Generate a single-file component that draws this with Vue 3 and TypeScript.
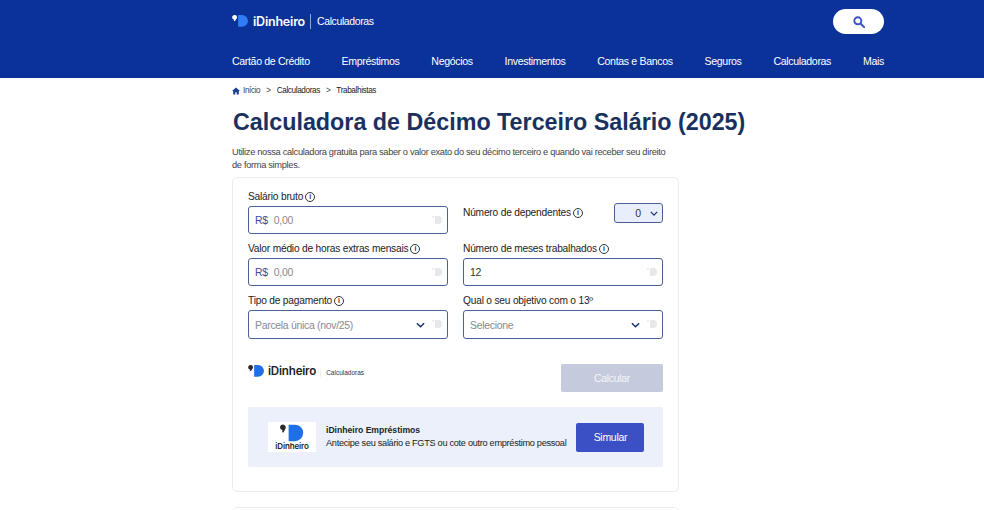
<script setup lang="ts">
const nav: string[] = ['Cartão de Crédito', 'Empréstimos', 'Negócios', 'Investimentos', 'Contas e Bancos', 'Seguros', 'Calculadoras', 'Mais']
</script>

<template>
  <div class="page">
    <header class="header">
      <div class="wrap">
        <div class="top">
          <div class="brand">
            <svg class="logo" viewBox="0 0 17 13" width="16" height="12"><path d="M6.5 0h4.2a6.3 6.3 0 0 1 0 12.8H6.5z" fill="#2f7df6"/><path d="M0 2.6a2.6 2.6 0 1 1 4.7 1.5L3 6.6 1.8 6.4 2 5A2.6 2.6 0 0 1 0 2.6z" fill="#fff"/></svg>
            <span class="wordmark">iDinheiro</span>
            <span class="divider"></span>
            <span class="brand-sub">Calculadoras</span>
          </div>
          <div class="search">
            <svg viewBox="0 0 14 14" width="12" height="12"><circle cx="5.6" cy="5.6" r="4.1" fill="none" stroke="#3a50c4" stroke-width="2.2"/><path d="M8.8 8.8 13 13" stroke="#3a50c4" stroke-width="2.4" stroke-linecap="round"/></svg>
          </div>
        </div>
        <nav class="nav"><a v-for="item in nav" :key="item">{{ item }}</a></nav>
      </div>
    </header>

    <main class="wrap">
      <div class="crumbs">
        <svg viewBox="0 0 10 10" width="8" height="8"><path d="M5 .5 0 5h1.5v4.5h2.6V6.5h1.8v3h2.6V5H10z" fill="#1c3f94"/></svg>
        <span class="home">Início</span><span class="sep">&gt;</span><span>Calculadoras</span><span class="sep">&gt;</span><span>Trabalhistas</span>
      </div>
      <h1 class="title">Calculadora de Décimo Terceiro Salário (2025)</h1>
      <p class="intro">Utilize nossa calculadora gratuita para saber o valor exato do seu décimo terceiro e quando vai receber seu direito de forma simples.</p>

      <section class="card">
        <div class="grid">
          <div class="field">
            <label>Salário bruto <i class="info">i</i></label>
            <div class="input"><b class="prefix">R$</b><span class="ph">0,00</span><span class="ghost"><em></em><u></u></span></div>
          </div>
          <div class="field-inline">
            <label>Número de dependentes <i class="info">i</i></label>
            <div class="mini-select"><span>0</span><svg viewBox="0 0 10 6" width="8" height="5"><path d="M1 1l4 4 4-4" fill="none" stroke="#16306e" stroke-width="1.5"/></svg></div>
          </div>
          <div class="field">
            <label>Valor médio de horas extras mensais <i class="info">i</i></label>
            <div class="input"><b class="prefix">R$</b><span class="ph">0,00</span><span class="ghost"><em></em><u></u></span></div>
          </div>
          <div class="field">
            <label>Número de meses trabalhados <i class="info">i</i></label>
            <div class="input"><span class="val">12</span><span class="ghost"><em></em><u></u></span></div>
          </div>
          <div class="field">
            <label>Tipo de pagamento <i class="info">i</i></label>
            <div class="input tall"><span class="ph">Parcela única (nov/25)</span><svg class="chev" viewBox="0 0 10 6" width="9" height="6"><path d="M1 1l4 4 4-4" fill="none" stroke="#16306e" stroke-width="1.6"/></svg><span class="ghost"><em></em><u></u></span></div>
          </div>
          <div class="field">
            <label>Qual o seu objetivo com o 13º</label>
            <div class="input tall"><span class="ph">Selecione</span><svg class="chev" viewBox="0 0 10 6" width="9" height="6"><path d="M1 1l4 4 4-4" fill="none" stroke="#16306e" stroke-width="1.6"/></svg><span class="ghost"><em></em><u></u></span></div>
          </div>
        </div>

        <div class="actions">
          <div class="brand2">
            <svg viewBox="0 0 17 13" width="16" height="12"><path d="M6.5 0h4.2a6.3 6.3 0 0 1 0 12.8H6.5z" fill="#1f6fe8"/><path d="M0 2.6a2.6 2.6 0 1 1 4.7 1.5L3 6.6 1.8 6.4 2 5A2.6 2.6 0 0 1 0 2.6z" fill="#2b2b2b"/></svg>
            <span class="wordmark dark">iDinheiro</span>
            <span class="brand2-line"></span>
            <span class="brand2-sub">Calculadoras</span>
          </div>
          <button class="calc" type="button">Calcular</button>
        </div>

        <div class="promo">
          <div class="promo-logo">
            <svg viewBox="0 0 26 18" width="25" height="18"><path d="M9 .3h6.5a8.6 8.6 0 0 1 0 17.2H9z" fill="#1f6fe8"/><path d="M0 3.2a3 3 0 1 1 5.4 1.8L3.6 8.4 2.3 8.2 2.5 6A3 3 0 0 1 0 3.2z" fill="#2b2b2b"/></svg>
            <span>iDinheiro</span>
          </div>
          <div class="promo-text">
            <strong>iDinheiro Empréstimos</strong>
            <span>Antecipe seu salário e FGTS ou cote outro empréstimo pessoal</span>
          </div>
          <button class="simular" type="button">Simular</button>
        </div>
      </section>

      <div class="next-card"></div>
    </main>
  </div>
</template>

<style>
html, body { margin: 0; background: #fff; overflow: hidden; }
</style>

<style scoped>
.page { font-family: "Liberation Sans", Arial, sans-serif; color: #222; height: 510px; overflow: hidden; }
.wrap { width: 652px; margin-left: 232px; }
.header { background: #0a3299; height: 78px; color: #fff; }
.top { height: 42px; display: flex; justify-content: space-between; align-items: flex-start; }
.brand { display: flex; align-items: center; height: 42px; }
.wordmark { font-family: "Inter", "Liberation Sans", sans-serif; font-weight: 600; font-size: 12.5px; letter-spacing: -.2px; margin-left: 5px; }
.wordmark.dark { color: #222; }
.divider { width: 1px; height: 15px; background: #8ea3d8; margin: 0 6px 0 5px; }
.brand-sub { font-size: 10.5px; letter-spacing: -.4px; }
.search { width: 51px; height: 25px; margin-top: 9px; border-radius: 13px; background: #fff; display: flex; align-items: center; justify-content: center; }
.nav { display: flex; justify-content: space-between; font-size: 10.6px; letter-spacing: -.35px; line-height: 12px; padding-top: 13px; }
.crumbs { height: 25px; display: flex; align-items: center; gap: 6px; font-size: 8.2px; letter-spacing: -.38px; color: #222; }
.crumbs .home { margin-left: -3px; color: #444; }
.crumbs .sep { color: #444; }
.title { margin: 0; padding: 6px 0 0 1px; font-size: 23.3px; line-height: 27px; font-weight: 700; color: #1a3160; }
.intro { margin: 10px 0 0; width: 440px; font-size: 9.3px; letter-spacing: -.33px; line-height: 13px; color: #444; }
.card { box-sizing: border-box; margin-top: 5px; width: 447px; height: 315px; border: 1px solid #ececf0; border-radius: 5px; padding: 12px 15px 0; }
.grid { display: grid; grid-template-columns: 200px 200px; column-gap: 15px; grid-template-rows: 44px 44px 45px; row-gap: 8px; }
.field { display: flex; flex-direction: column; gap: 3px; padding-top: 1px; }
label { font-size: 10.2px; letter-spacing: -.2px; line-height: 12px; color: #222; display: flex; align-items: center; gap: 2px; }
.info { box-sizing: border-box; width: 10px; height: 10px; border: 1px solid #333; border-radius: 50%; font: 700 7px/8px "Liberation Sans", sans-serif; text-align: center; color: #333; letter-spacing: 0; }
.input { box-sizing: border-box; height: 28px; border: 1px solid #4b6099; border-radius: 3px; display: flex; align-items: center; padding: 0 4px 0 6px; font-size: 10.5px; letter-spacing: -.32px; }
.input.tall { height: 29px; }
.prefix { font-weight: 400; color: #3a509a; margin-right: 6px; }
.ph { color: #8a8a90; }
.val { color: #333; }
.ghost { margin-left: auto; width: 11px; height: 9px; display: flex; align-items: flex-start; gap: 1px; }
.ghost em { width: 2px; height: 2px; background: #e8e8ec; border-radius: 50%; }
.ghost u { width: 7px; height: 8px; background: #e8e8ec; border-radius: 0 4px 4px 0; }
.chev { margin-left: auto; margin-right: 7px; }
.chev + .ghost { margin-left: 0; }
.field-inline { display: flex; align-items: flex-start; justify-content: space-between; padding-top: 13px; }
.field-inline label { margin-top: 4px; }
.mini-select { box-sizing: border-box; width: 49px; height: 20px; border: 1px solid #4b6099; border-radius: 3px; background: #e8eefb; display: flex; align-items: center; justify-content: flex-end; gap: 9px; padding-right: 4px; font-size: 10.5px; color: #333; }
.actions { display: flex; justify-content: space-between; align-items: flex-start; margin-top: 25px; }
.brand2 { display: flex; align-items: center; height: 13px; }
.brand2 .wordmark { font-size: 11.6px; margin-left: 4px; }
.brand2-line { width: 1px; height: 8px; background: #eee; margin: 4px 4px 0 4px; }
.brand2-sub { font-size: 6.5px; margin: 3px 0 0 1px; color: #333; }
.calc { width: 102px; height: 28px; border: 0; border-radius: 2px; background: #c5cbdc; color: #f4f5f8; font: 10.5px "Liberation Sans", sans-serif; letter-spacing: -.3px; }
.promo { box-sizing: border-box; margin-top: 15px; height: 60px; background: #ebf0fb; border-radius: 2px; padding-left: 20px; display: flex; align-items: center; }
.promo-logo { width: 48px; height: 30px; background: #fff; display: flex; flex-direction: column; align-items: center; justify-content: flex-start; padding-top: 2px; box-sizing: border-box; }
.promo-logo span { font-family: "Inter", "Liberation Sans", sans-serif; font-weight: 600; font-size: 8px; line-height: 9px; letter-spacing: -.1px; color: #222; }
.promo-text { margin-left: 10px; padding-bottom: 2px; display: flex; flex-direction: column; gap: 3px; font-size: 9.2px; letter-spacing: -.3px; line-height: 10px; color: #222; white-space: nowrap; }
.promo-text strong { font-size: 8.6px; letter-spacing: 0; }
.simular { margin-left: 10px; width: 68px; height: 29px; border: 0; border-radius: 2px; background: #3a50c4; color: #fff; font: 10.5px "Liberation Sans", sans-serif; letter-spacing: -.3px; }
.next-card { margin-top: 15px; width: 447px; height: 20px; box-sizing: border-box; border: 1px solid #ececf0; border-radius: 5px; }
</style>
